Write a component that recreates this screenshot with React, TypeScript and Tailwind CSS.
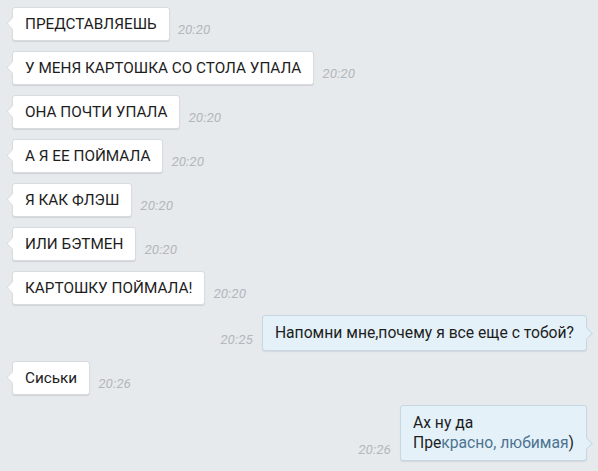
import React from 'react';

type Msg = { text: React.ReactNode; time: string; out?: boolean };

const messages: Msg[] = [
  { text: 'ПРЕДСТАВЛЯЕШЬ', time: '20:20' },
  { text: 'У МЕНЯ КАРТОШКА СО СТОЛА УПАЛА', time: '20:20' },
  { text: 'ОНА ПОЧТИ УПАЛА', time: '20:20' },
  { text: 'А Я ЕЕ ПОЙМАЛА', time: '20:20' },
  { text: 'Я КАК ФЛЭШ', time: '20:20' },
  { text: 'ИЛИ БЭТМЕН', time: '20:20' },
  { text: 'КАРТОШКУ ПОЙМАЛА!', time: '20:20' },
  { text: 'Напомни мне,почему я все еще с тобой?', time: '20:25', out: true },
  { text: 'Сиськи', time: '20:26' },
  {
    text: (
      <>
        Ах ну да
        <br />
        Пре<span className="text-[#4d7391]">красно, любимая</span>)
      </>
    ),
    time: '20:26',
    out: true,
  },
];

function Time({ value }: { value: string }) {
  return <span className="pb-[5px] text-[13.5px] italic text-[#b3b8bd] leading-none">{value}</span>;
}

function Bubble({ msg }: { msg: Msg }) {
  if (msg.out) {
    return (
      <div className="flex items-end justify-end gap-[9px] pr-[11px]">
        <Time value={msg.time} />
        <div className="relative rounded-[3px] border border-[#c6d7e3] bg-[#e4f1f9] px-3 py-[7px] text-[15.7px] leading-[20px] text-[#1d1d1d] shadow-[0_1px_1px_rgba(0,0,0,0.08)]">
          {msg.text}
          {/* tail */}
          <span className="absolute -right-[5px] bottom-[12px] h-[9px] w-[9px] rotate-45 border-r border-t border-[#c6d7e3] bg-[#e4f1f9]" />
        </div>
      </div>
    );
  }
  return (
    <div className="flex items-end gap-[8px] pl-[12px]">
      <div className="relative rounded-[3px] border border-[#d7dce0] bg-white px-3 py-[6px] text-[15.3px] leading-[20px] text-[#1d1d1d] shadow-[0_1px_1px_rgba(0,0,0,0.1)]">
        {msg.text}
        <span className="absolute -left-[5px] bottom-[12px] h-[9px] w-[9px] rotate-45 border-b border-l border-[#d7dce0] bg-white" />
      </div>
      <Time value={msg.time} />
    </div>
  );
}

export default function App() {
  return (
    <div className="h-[471px] w-[598px] overflow-hidden bg-[#e7eaed] pt-[7px] font-['Roboto','Liberation_Sans',sans-serif]">
      <div className="flex flex-col gap-[10px]">
        {messages.map((m, i) => (
          <Bubble key={i} msg={m} />
        ))}
      </div>
    </div>
  );
}
